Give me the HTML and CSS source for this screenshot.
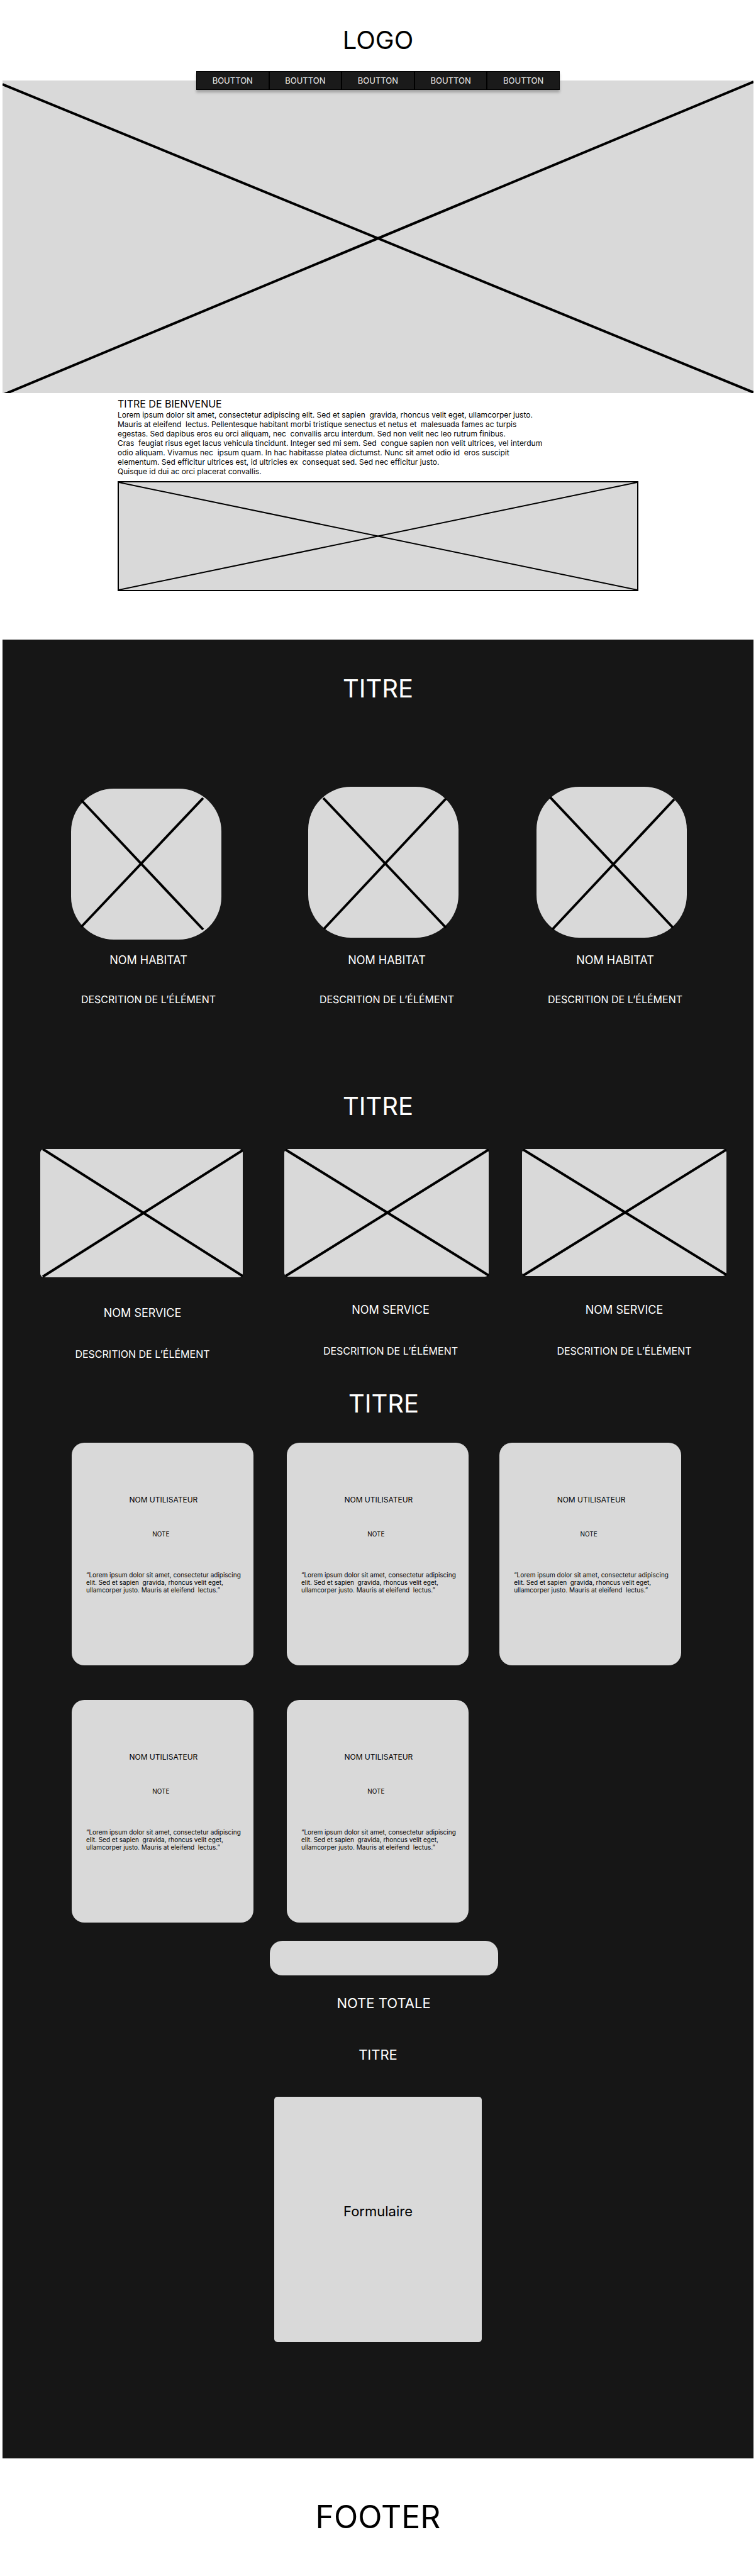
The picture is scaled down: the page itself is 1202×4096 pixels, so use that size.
FILE: index.html
```html
<!DOCTYPE html>
<html lang="fr">
<head>
<meta charset="utf-8">
<meta name="viewport" content="width=device-width, initial-scale=1">
<title>Accueil</title>
<link rel="stylesheet" href="styles.css">
</head>
<body>
<div class="page">
  <header class="header">
    <div class="logo">LOGO</div>
    <nav class="nav">
      <button type="button">BOUTTON</button>
      <button type="button">BOUTTON</button>
      <button type="button">BOUTTON</button>
      <button type="button">BOUTTON</button>
      <button type="button">BOUTTON</button>
    </nav>
  </header>

  <svg class="hero" viewBox="0 0 1194 497" preserveAspectRatio="none" aria-hidden="true">
    <path d="M0 6L1194 496M1194 2L0 500"/>
  </svg>

  <section class="welcome">
    <h1>TITRE DE BIENVENUE</h1>
    <p>Lorem ipsum dolor sit amet, consectetur adipiscing elit. Sed et sapien&nbsp; gravida, rhoncus velit eget, ullamcorper justo.<br>
    Mauris at eleifend&nbsp; lectus. Pellentesque habitant morbi tristique senectus et netus et&nbsp; malesuada fames ac turpis<br>
    egestas. Sed dapibus eros eu orci aliquam, nec&nbsp; convallis arcu interdum. Sed non velit nec leo rutrum finibus.<br>
    Cras&nbsp; feugiat risus eget lacus vehicula tincidunt. Integer sed mi sem. Sed&nbsp; congue sapien non velit ultrices, vel interdum<br>
    odio aliquam. Vivamus nec&nbsp; ipsum quam. In hac habitasse platea dictumst. Nunc sit amet odio id&nbsp; eros suscipit<br>
    elementum. Sed efficitur ultrices est, id ultricies ex&nbsp; consequat sed. Sed nec efficitur justo.<br>
    Quisque id dui ac orci placerat convallis.</p>
    <svg class="banner" viewBox="0 0 824 171" preserveAspectRatio="none" aria-hidden="true">
      <path d="M0 0L824 171M824 0L0 171"/>
    </svg>
  </section>

  <main class="content">
    <h2 class="title">TITRE</h2>
    <section class="row habitats">
      <article>
        <svg width="239" height="243" viewBox="0 0 239 243" aria-hidden="true">
          <rect y="3" width="239" height="240" rx="68"/>
          <path d="M16 21L210 227M210 18L16 223"/>
        </svg>
        <h3>NOM HABITAT</h3>
        <p>DESCRITION DE L’ÉLÉMENT</p>
      </article>
      <article>
        <svg width="239" height="243" viewBox="0 0 239 243" aria-hidden="true">
          <rect width="239" height="240" rx="68"/>
          <path d="M24 18L219 224M219 19L25 226"/>
        </svg>
        <h3>NOM HABITAT</h3>
        <p>DESCRITION DE L’ÉLÉMENT</p>
      </article>
      <article>
        <svg width="239" height="243" viewBox="0 0 239 243" aria-hidden="true">
          <rect width="239" height="240" rx="68"/>
          <path d="M22 17L217 224M219 20L25 227"/>
        </svg>
        <h3>NOM HABITAT</h3>
        <p>DESCRITION DE L’ÉLÉMENT</p>
      </article>
    </section>

    <h2 class="title">TITRE</h2>
    <section class="row services">
      <article>
        <svg width="322" height="208" viewBox="0 0 322 208" aria-hidden="true">
          <rect width="322" height="204" rx="6"/>
          <path d="M4 0L322 202M4 203L322 2"/>
        </svg>
        <h3>NOM SERVICE</h3>
        <p>DESCRITION DE L’ÉLÉMENT</p>
      </article>
      <article>
        <svg width="325" height="203" viewBox="0 0 325 203" aria-hidden="true">
          <rect width="325" height="203" rx="6"/>
          <path d="M2 1L325 201M2 202L325 1"/>
        </svg>
        <h3>NOM SERVICE</h3>
        <p>DESCRITION DE L’ÉLÉMENT</p>
      </article>
      <article>
        <svg width="325" height="203" viewBox="0 0 325 203" aria-hidden="true">
          <rect width="325" height="202" rx="6"/>
          <path d="M2 1L325 200M2 201L325 1"/>
        </svg>
        <h3>NOM SERVICE</h3>
        <p>DESCRITION DE L’ÉLÉMENT</p>
      </article>
    </section>

    <h2 class="title reviews-title">TITRE</h2>
    <section class="row reviews">
      <article>
        <h3>NOM UTILISATEUR</h3>
        <p class="note">NOTE</p>
        <p>“Lorem ipsum dolor sit amet, consectetur adipiscing<br>elit. Sed et sapien&nbsp; gravida, rhoncus velit eget,<br>ullamcorper justo. Mauris at eleifend&nbsp; lectus.”</p>
      </article>
      <article>
        <h3>NOM UTILISATEUR</h3>
        <p class="note">NOTE</p>
        <p>“Lorem ipsum dolor sit amet, consectetur adipiscing<br>elit. Sed et sapien&nbsp; gravida, rhoncus velit eget,<br>ullamcorper justo. Mauris at eleifend&nbsp; lectus.”</p>
      </article>
      <article>
        <h3>NOM UTILISATEUR</h3>
        <p class="note">NOTE</p>
        <p>“Lorem ipsum dolor sit amet, consectetur adipiscing<br>elit. Sed et sapien&nbsp; gravida, rhoncus velit eget,<br>ullamcorper justo. Mauris at eleifend&nbsp; lectus.”</p>
      </article>
      <article>
        <h3>NOM UTILISATEUR</h3>
        <p class="note">NOTE</p>
        <p>“Lorem ipsum dolor sit amet, consectetur adipiscing<br>elit. Sed et sapien&nbsp; gravida, rhoncus velit eget,<br>ullamcorper justo. Mauris at eleifend&nbsp; lectus.”</p>
      </article>
      <article>
        <h3>NOM UTILISATEUR</h3>
        <p class="note">NOTE</p>
        <p>“Lorem ipsum dolor sit amet, consectetur adipiscing<br>elit. Sed et sapien&nbsp; gravida, rhoncus velit eget,<br>ullamcorper justo. Mauris at eleifend&nbsp; lectus.”</p>
      </article>
    </section>
    <div class="total">
      <div class="total-bar"></div>
      <p>NOTE TOTALE</p>
    </div>

    <section class="contact">
      <h2>TITRE</h2>
      <div class="form-box">Formulaire</div>
    </section>
  </main>

  <footer class="footer">FOOTER</footer>
</div>
</body>
</html>
```
FILE: styles.css
```css
* {
  box-sizing: border-box;
}

body {
  margin: 0;
  background: #fff;
  color: #000;
  font-family: Inter, "Liberation Sans", sans-serif;
}

h1, h2, h3, p {
  margin: 0;
  font-weight: 400;
}

svg {
  display: block;
}

.page {
  padding: 0 4px;
}

.header {
  display: flex;
  flex-direction: column;
  align-items: center;
  gap: 25px;
  padding-top: 40px;
}

.logo,
.title {
  font-size: 40px;
  line-height: 48px;
  text-align: center;
}

/* The menu straddles the top edge of the hero picture */
.nav {
  position: relative;
  display: flex;
  width: 100%;
  max-width: 578px;
  margin-bottom: -15px;
  box-shadow: 0 4px 4px rgba(0, 0, 0, 0.25);
}

.nav button {
  flex: 1;
  height: 30px;
  padding: 0;
  border: 1px solid #000;
  background: #1a1a1a;
  color: #f0f0f0;
  font: 13px/16px Inter, "Liberation Sans", sans-serif;
}

.hero {
  width: 100%;
  height: 497px;
  background: #d9d9d9;
}

.hero path {
  stroke: #000;
  stroke-width: 4;
}

.welcome {
  max-width: 828px;
  margin: 0 auto;
  padding: 8px 0 77px;
}

.welcome h1 {
  font-size: 16px;
  line-height: 19px;
}

.welcome p {
  margin-bottom: 8px;
  font-size: 12px;
  line-height: 15px;
}

.banner {
  width: 100%;
  height: 175px;
  border: 2px solid #000;
  background: #d9d9d9;
}

.banner path {
  stroke: #000;
  stroke-width: 2;
}

.content {
  padding: 54px 0 185px;
  background: #161616;
  color: #fff;
}

.row {
  display: grid;
}

/* Even tracks are the spaces between the cards */
.row > :nth-child(3n + 1) {
  grid-column: 1;
}

.row > :nth-child(3n + 2) {
  grid-column: 3;
}

.row > :nth-child(3n) {
  grid-column: 5;
}

.row rect {
  fill: #d9d9d9;
}

.row path {
  stroke: #000;
  stroke-width: 4;
}

.habitats h3,
.services h3 {
  font-size: 18px;
  line-height: 22px;
  text-align: center;
}

.habitats p,
.services p {
  font-size: 16px;
  line-height: 20px;
  text-align: center;
}

.habitats {
  grid-template-columns: 246fr 131fr 250fr 113fr 250fr;
  padding: 132px 95px 136px 109px;
}

.habitats h3 {
  margin: 22px 0 41px;
}

.services {
  grid-template-columns: 325fr 63fr 338fr 40fr 325fr;
  padding: 44px 43px 45px 60px;
}

.services h3 {
  margin: 42px 0 44px;
}

.reviews-title,
.total {
  padding-left: 18px;
}

.reviews {
  grid-template-columns: 287fr 56fr 287fr 52fr 287fr;
  row-gap: 55px;
  padding: 38px 115px 29px 110px;
}

.reviews article {
  height: 354px;
  padding: 83px 20px 0 23px;
  border-radius: 20px;
  background: #d9d9d9;
  color: #000;
  font-size: 10px;
  line-height: 12px;
  white-space: nowrap;
}

.reviews h3 {
  font-size: 12px;
  line-height: 15px;
  text-align: center;
}

.reviews .note {
  margin: 41px 0 53px;
  padding-right: 8px;
  text-align: center;
}

.total {
  display: flex;
  flex-direction: column;
  align-items: center;
  gap: 31px;
  font-size: 22px;
  line-height: 26px;
}

.total-bar {
  width: 100%;
  max-width: 363px;
  height: 55px;
  border-radius: 20px;
  background: #d9d9d9;
}

.contact {
  display: flex;
  flex-direction: column;
  align-items: center;
  gap: 54px;
  padding-top: 56px;
  font-size: 22px;
  line-height: 26px;
}

.contact h2 {
  font-size: 22px;
}

.form-box {
  width: 100%;
  max-width: 330px;
  height: 390px;
  padding-top: 169px;
  border-radius: 5px;
  background: #d9d9d9;
  color: #000;
  text-align: center;
}

.footer {
  padding: 63px 0 64px;
  font-size: 50px;
  line-height: 60px;
  text-align: center;
}
```
